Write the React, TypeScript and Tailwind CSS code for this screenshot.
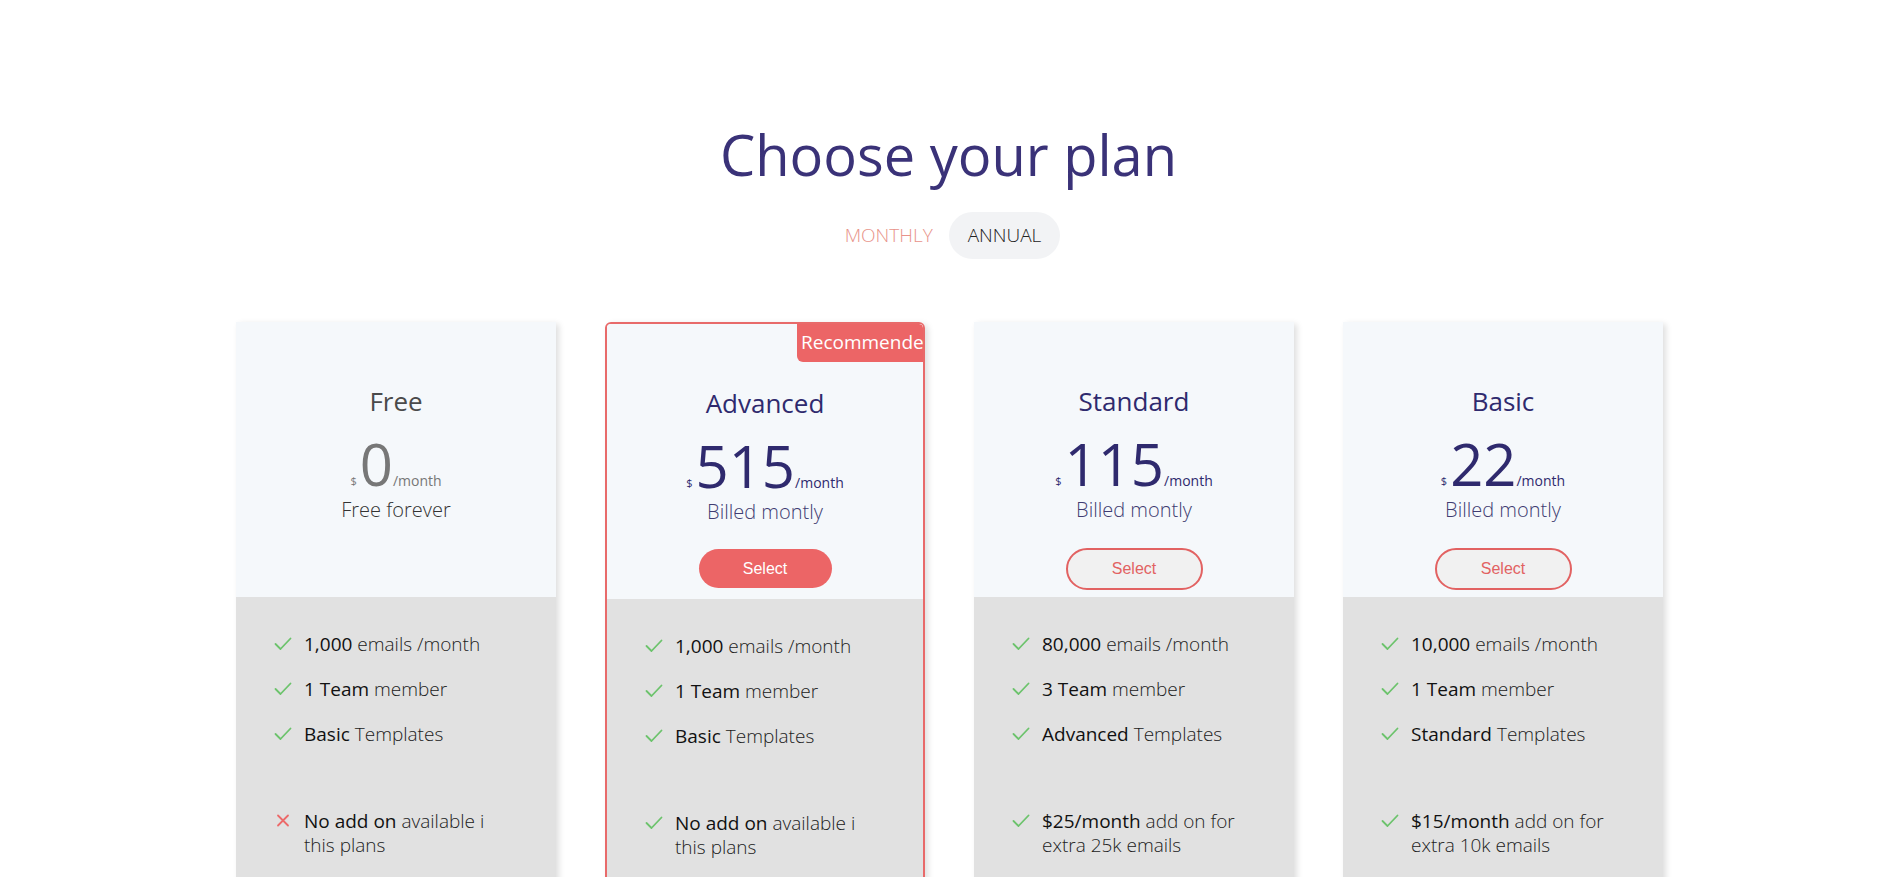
import React from "react";

type Feature = { bold: string; rest: string; ok: boolean; extra?: boolean };
type Plan = {
  name: string;
  price: string;
  sub: string;
  featured?: boolean;
  button?: "solid" | "outline";
  muted?: boolean;
  features: Feature[];
};

const plans: Plan[] = [
  {
    name: "Free",
    price: "0",
    sub: "Free forever",
    muted: true,
    features: [
      { bold: "1,000", rest: " emails /month", ok: true },
      { bold: "1 Team", rest: " member", ok: true },
      { bold: "Basic", rest: " Templates", ok: true },
      { bold: "No add on", rest: " available i this plans", ok: false, extra: true },
    ],
  },
  {
    name: "Advanced",
    price: "515",
    sub: "Billed montly",
    featured: true,
    button: "solid",
    features: [
      { bold: "1,000", rest: " emails /month", ok: true },
      { bold: "1 Team", rest: " member", ok: true },
      { bold: "Basic", rest: " Templates", ok: true },
      { bold: "No add on", rest: " available i this plans", ok: true, extra: true },
    ],
  },
  {
    name: "Standard",
    price: "115",
    sub: "Billed montly",
    button: "outline",
    features: [
      { bold: "80,000", rest: " emails /month", ok: true },
      { bold: "3 Team", rest: " member", ok: true },
      { bold: "Advanced", rest: " Templates", ok: true },
      { bold: "$25/month", rest: " add on for extra 25k emails", ok: true, extra: true },
    ],
  },
  {
    name: "Basic",
    price: "22",
    sub: "Billed montly",
    button: "outline",
    features: [
      { bold: "10,000", rest: " emails /month", ok: true },
      { bold: "1 Team", rest: " member", ok: true },
      { bold: "Standard", rest: " Templates", ok: true },
      { bold: "$15/month", rest: " add on for extra 10k emails", ok: true, extra: true },
    ],
  },
];

function Check() {
  return (
    <svg width="18" height="14" viewBox="0 0 18 14" className="shrink-0 mt-[5px]">
      <path d="M1.5 7 L6.5 12 L16.5 1.5" fill="none" stroke="#6cc36c" strokeWidth="1.8" strokeLinecap="round" strokeLinejoin="round" />
    </svg>
  );
}

function Cross() {
  return (
    <svg width="18" height="14" viewBox="0 0 18 14" className="shrink-0 mt-[5px]">
      <path d="M4 1.5 L14 11.5 M14 1.5 L4 11.5" fill="none" stroke="#ec6a6a" strokeWidth="1.8" strokeLinecap="round" />
    </svg>
  );
}

function Card({ plan }: { plan: Plan }) {
  const nameColor = plan.muted ? "text-[#4a4a4a]" : "text-[#2f2a6e]";
  const priceColor = plan.muted ? "text-[#777777]" : "text-[#2f2a6e]";
  const subColor = plan.muted ? "text-[#333333]" : "text-[#3f3c72]";
  return (
    <div
      className={
        "relative w-[320px] overflow-hidden shadow-[3px_2px_6px_rgba(0,0,0,0.13)] " +
        (plan.featured ? "border-2 border-[#e86a6a] rounded-[6px]" : "")
      }
    >
      {plan.featured && (
        <div className="absolute top-0 right-0 w-[126px] h-[38px] overflow-hidden whitespace-nowrap bg-[#ec6566] rounded-bl-[6px] rounded-tr-[4px] pl-[4px] text-[19px] leading-[36px] text-white font-normal">
          Recommended
        </div>
      )}
      <div className="h-[275px] bg-[#f5f8fb] flex flex-col items-center pt-[62px]">
        <div className={"text-[26px] leading-[34px] " + nameColor}>{plan.name}</div>
        <div className={"flex items-end mt-[17px] " + priceColor}>
          <span className="text-[11px] leading-[20px] mr-[3px] mb-[2px]">$</span>
          <span className="text-[58px] leading-[58px] font-normal">{plan.price}</span>
          <span className="text-[14px] leading-[20px] mb-[2px]">/month</span>
        </div>
        <div className={"text-[20px] leading-[26px] mt-[4px] font-light " + subColor}>{plan.sub}</div>
        {plan.button === "solid" && (
          <button className="mt-[24px] w-[133px] h-[39px] rounded-full bg-[#ec6566] text-white text-[16px] font-['Liberation_Sans',Arial,sans-serif]">
            Select
          </button>
        )}
        {plan.button === "outline" && (
          <button className="mt-[25px] w-[137px] h-[42px] rounded-full bg-[#f1f1f1] border-2 border-[#e26262] text-[#e26262] text-[16px] font-['Liberation_Sans',Arial,sans-serif]">
            Select
          </button>
        )}
      </div>
      <div className="bg-[#e1e1e1] pt-[35px] pb-[60px] pl-[38px] pr-[20px] flex flex-col gap-[21px]">
        {plan.features.map((f, i) => (
          <div key={i} className={"flex gap-[12px] " + (f.extra ? "mt-[42px]" : "")}>
            {f.ok ? <Check /> : <Cross />}
            <div className="text-[19px] leading-[24px] text-[#222222] font-light w-[204px]">
              <span className="font-medium text-[#111111]">{f.bold}</span>
              {f.rest}
            </div>
          </div>
        ))}
      </div>
    </div>
  );
}

export default function App() {
  return (
    <div className="min-h-screen bg-white font-['Open_Sans',sans-serif] pt-[118px] pb-[40px]">
      <h1 className="text-center text-[56px] leading-[72px] text-[#3a3278] font-normal">Choose your plan</h1>
      <div className="flex justify-center items-center gap-[16px] mt-[22px] pl-[8px]">
        <span className="text-[19px] text-[#e8938a] font-light">MONTHLY</span>
        <span className="px-[19px] h-[47px] flex items-center rounded-full bg-[#f2f3f5] text-[19px] text-[#222222] font-light">
          ANNUAL
        </span>
      </div>
      <div className="flex justify-center items-start gap-[49px] mt-[63px] pl-[2px]">
        {plans.map((p) => (
          <Card key={p.name} plan={p} />
        ))}
      </div>
    </div>
  );
}
